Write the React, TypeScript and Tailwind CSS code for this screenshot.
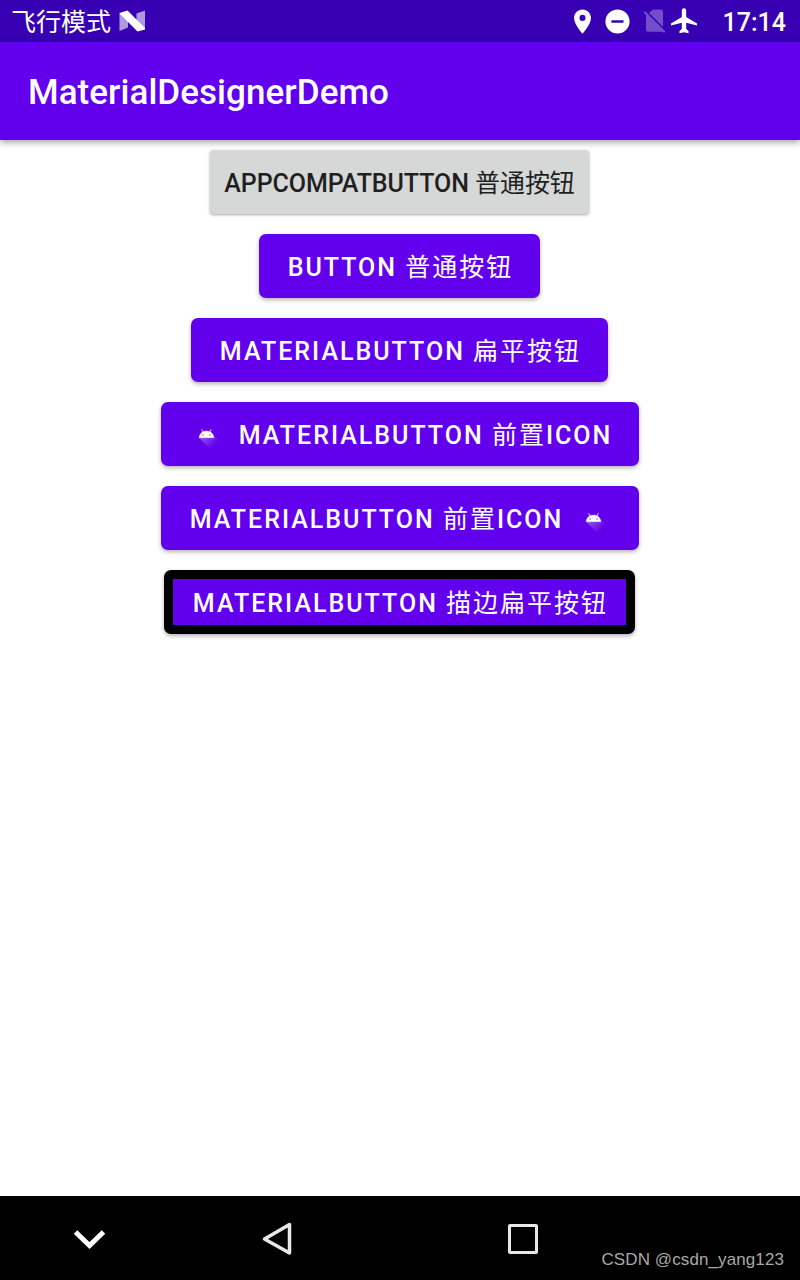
import type { ReactNode } from 'react';

const AndroidIcon = ({ id }: { id: string }) => (
  <svg className="h-[35px] w-[35px] shrink-0" viewBox="0 0 108 108">
    <defs>
      <linearGradient id={id} x1="43" y1="50" x2="80" y2="87" gradientUnits="userSpaceOnUse">
        <stop offset="0" stopColor="#fff" stopOpacity="0.35" />
        <stop offset="1" stopColor="#fff" stopOpacity="0" />
      </linearGradient>
    </defs>
    <path
      fill={`url(#${id})`}
      d="M31,63.928c0,0 6.4,-11 12.1,-13.1c7.2,-2.6 26,-1.4 26,-1.4l38.1,38.1L107,108.928l-32,-1L31,63.928z"
    />
    <path
      fill="#fff"
      stroke="#fff"
      strokeWidth="0.8"
      d="M65.3,45.828l3.8,-6.6c0.2,-0.4 0.1,-0.9 -0.3,-1.1c-0.4,-0.2 -0.9,-0.1 -1.1,0.3l-3.9,6.7c-6.3,-2.8 -13.4,-2.8 -19.7,0l-3.9,-6.7c-0.2,-0.4 -0.7,-0.5 -1.1,-0.3C38.8,38.328 38.7,38.828 38.9,39.228l3.8,6.6C36.2,49.428 31.7,56.028 31,63.928h46C76.3,56.028 71.8,49.428 65.3,45.828z"
    />
    <circle cx="43.4" cy="55.4" r="1.9" fill="#6200ee" />
    <circle cx="64.7" cy="55.4" r="1.9" fill="#6200ee" />
  </svg>
);

const StatusBar = () => (
  <div className="flex h-[42px] items-center bg-[#3700b3] text-[25px] text-white">
    <span className="ml-[11px] pt-[3px] leading-[42px]">飞行模式</span>
    <svg className="ml-[8px] h-[24px] w-[26px]" viewBox="0 0 26 24" fill="#fff">
      <path fillOpacity="0.6" d="M0.5 4L9 8V18.5L0.5 22ZM17.5 4.5L26 1.5V20L17.5 16Z" />
      <path d="M0.5 4.5L2 3.5L8.5 1.5L26 19V20.5L18.5 22.5Z" />
    </svg>
    <div className="ml-auto flex items-center">
      <svg className="h-[29px] w-[29px]" viewBox="0 0 24 24" fill="#fff">
        <path d="M12 2C8.13 2 5 5.13 5 9c0 5.25 7 13 7 13s7-7.75 7-13c0-3.87-3.13-7-7-7zm0 9.5a2.5 2.5 0 1 1 0-5 2.5 2.5 0 0 1 0 5z" />
      </svg>
      <svg className="ml-[6px] h-[29px] w-[29px]" viewBox="0 0 24 24" fill="#fff">
        <path d="M12 2a10 10 0 1 0 0 20 10 10 0 0 0 0-20zm5 11H7v-2h10v2z" />
      </svg>
      <svg className="ml-[11px] h-[26px] w-[24px]" viewBox="0 0 24 26" fill="#fff" fillOpacity="0.3">
        <path d="M10 1.5H18Q20 1.5 20 3.5V19L6 5Z" />
        <path d="M0.5 4.5L2 3L22.5 23.5L21 25L19.5 23.8H5Q3 23.8 3 22V7Z" />
      </svg>
      <svg className="ml-[4px] h-[26px] w-[26px]" viewBox="0 0 26 26" fill="#fff">
        <path d="M26 17.5V15.5L15.2 9V2.5Q15.2 .3 13 .3T10.8 2.5V9L0 15.5V17.5L10.8 14.8V21L8.5 23V25.3L13 24.3L17.5 25.3V23L15.2 21V14.8Z" />
      </svg>
      <span className="mr-[14px] ml-[26px] pt-[4px] font-medium">17:14</span>
    </div>
  </div>
);

type ButtonProps = { children: ReactNode; className?: string };

const MaterialButton = ({ children, className = 'pr-[27px] pl-[28px]' }: ButtonProps) => (
  <button
    className={`flex h-[64px] items-center rounded-[7px] bg-[#6200ee] text-[25px] font-medium tracking-[2px] whitespace-nowrap text-white shadow-[0_2px_4px_rgba(0,0,0,0.3)] ${className}`}
  >
    {children}
  </button>
);

const Label = ({ text, zh, end = '' }: { text: string; zh: string; end?: string }) => (
  <span className="pt-[4px]">
    {text} <span className="font-normal">{zh}</span>
    {end}
  </span>
);

const NavBar = () => (
  <nav className="flex h-[84px] bg-black">
    <svg
      className="mt-[32px] ml-[73px] h-[24px] w-[33px]"
      viewBox="0 0 33 24"
      fill="none"
      stroke="#fff"
      strokeWidth="5"
    >
      <path d="M2.5 4L16.5 17.5L30.5 4" />
    </svg>
    <svg
      className="mt-[25px] ml-[155px] h-[36px] w-[32px]"
      viewBox="0 0 32 36"
      fill="none"
      stroke="#e8e8e8"
      strokeWidth="3.5"
      strokeLinejoin="round"
    >
      <path d="M3.5 18L28.5 3.5V32Z" />
    </svg>
    <div className="mt-[28px] ml-[215px] h-[30px] w-[30px] rounded-[2px] border-[3.5px] border-[#e8e8e8]" />
    <span className="mt-[50px] mr-[16px] ml-auto font-['Liberation_Sans',sans-serif] text-[17px] leading-[28px] tracking-[0.1px] text-[#a8a8a8]">
      CSDN @csdn_yang123
    </span>
  </nav>
);

export default function App() {
  return (
    <div className="flex h-[1280px] w-[800px] flex-col bg-white font-['Roboto','Noto_Sans_CJK_SC',sans-serif]">
      <StatusBar />
      <header className="z-10 flex h-[98px] items-center bg-[#6200ee] pl-[28px] shadow-[0_2px_7px_rgba(0,0,0,0.4)]">
        <h1 className="pt-[4px] text-[35px] font-medium tracking-[0.05px] text-white">MaterialDesignerDemo</h1>
      </header>

      <main className="flex flex-1 flex-col items-center gap-[20px] pt-[10px]">
        <button className="mr-[1px] h-[64px] rounded-[3.5px] bg-[#d6d7d7] px-[14px] pt-[4px] text-[25px] font-medium tracking-[-0.07px] whitespace-nowrap text-[#1f1f1f] shadow-[0_1px_3px_rgba(0,0,0,0.35)]">
          <Label text="APPCOMPATBUTTON" zh="普通按钮" />
        </button>
        <MaterialButton className="mr-[1px] pr-[26.5px] pl-[28.5px]">
          <Label text="BUTTON" zh="普通按钮" />
        </MaterialButton>
        <MaterialButton className="mr-[1px] pr-[26.5px] pl-[28.5px]">
          <Label text="MATERIALBUTTON" zh="扁平按钮" />
        </MaterialButton>
        <MaterialButton className="gap-[15px] pr-[27px] pl-[28px]">
          <AndroidIcon id="leadingShade" />
          <Label text="MATERIALBUTTON" zh="前置" end="ICON" />
        </MaterialButton>
        <MaterialButton className="gap-[13px] pr-[28px] pl-[29px]">
          <Label text="MATERIALBUTTON" zh="前置" end="ICON" />
          <AndroidIcon id="trailingShade" />
        </MaterialButton>
        <MaterialButton className="mr-[1px] border-[9px] border-black pr-[17.5px] pl-[19.5px]">
          <Label text="MATERIALBUTTON" zh="描边扁平按钮" />
        </MaterialButton>
      </main>

      <NavBar />
    </div>
  );
}
